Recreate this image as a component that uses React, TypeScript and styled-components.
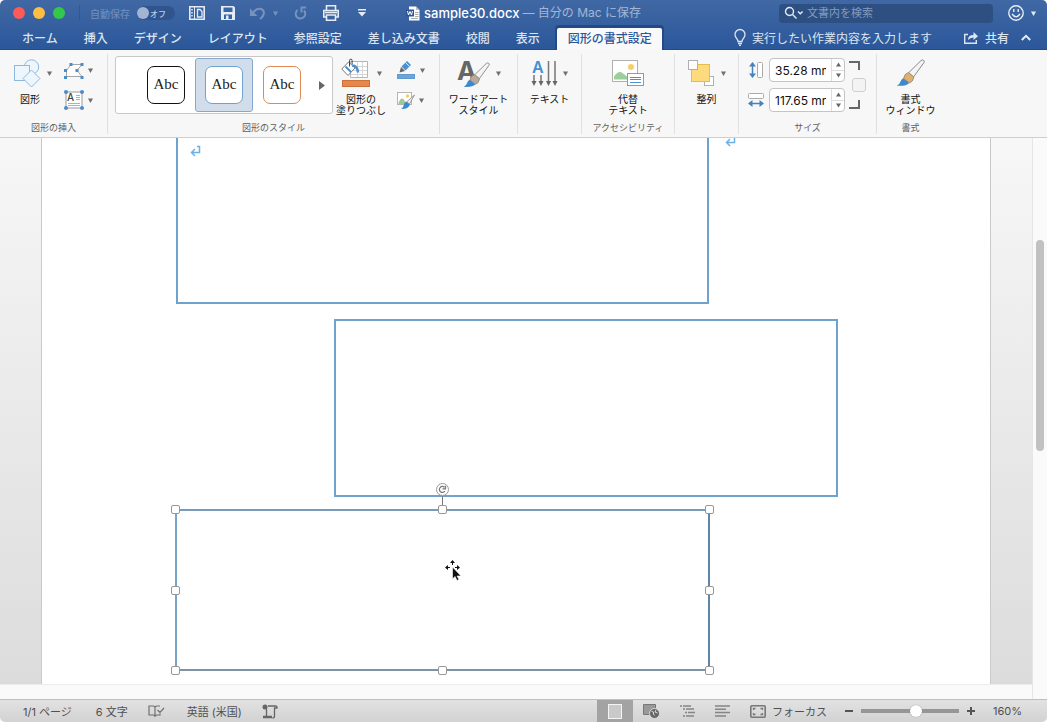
import React from "react";
import styled, { createGlobalStyle, css } from "styled-components";

const Global = createGlobalStyle`
  *, *::before, *::after { box-sizing: border-box; }
  body { margin: 0; background: #fff; }
  body, button, input {
    font-family: Inter, "Noto Sans CJK JP", sans-serif;
  }
  button { border: 0; padding: 0; background: none; color: inherit; font-size: inherit; }
  svg { display: block; flex: none; overflow: visible; }
`;

const Window = styled.div`
  display: flex;
  flex-direction: column;
  min-height: 100vh;
  border-radius: 5px;
  overflow: hidden;
  color: #1c1c1c;
`;

const Header = styled.header`
  background: linear-gradient(#4068a4, #2b579a);
  border-bottom: 1px solid #244b87;
  color: #dfe7f2;
`;

const TitleBar = styled.div`
  display: grid;
  grid-template-columns: 1fr auto 1fr;
  align-items: center;
  height: 26px;
`;

const QuickAccess = styled.div`
  display: flex;
  align-items: center;
  padding-left: 13px;
`;

const Lights = styled.div`
  display: flex;
  gap: 8px;
  padding-right: 14px;
  margin-right: 10px;
  border-right: 1px solid #33588f;
`;

const Light = styled.button<{ $color: string }>`
  width: 12px;
  height: 12px;
  margin: 2px 0;
  border-radius: 50%;
  background: ${(p) => p.$color};
`;

const AutoSave = styled.label`
  display: flex;
  align-items: center;
  gap: 7px;
  margin-right: 14px;
  font-size: 10px;
  font-weight: 500;
  color: #6d8aba;
`;

const Switch = styled.span`
  position: relative;
  display: flex;
  align-items: center;
  justify-content: flex-end;
  width: 38px;
  height: 14px;
  padding-right: 9px;
  border-radius: 7px;
  background: #30558e;
  color: #bccbe1;
  font-size: 8px;
  input {
    appearance: none;
    position: absolute;
    left: 0;
    top: 1px;
    width: 12px;
    height: 12px;
    margin: 0;
    border-radius: 50%;
    background: #a2b4d2;
  }
`;

const IconButton = styled.button<{ $gap?: number; $dim?: boolean }>`
  display: flex;
  align-items: center;
  gap: 7px;
  margin-right: ${(p) => p.$gap ?? 0}px;
  color: ${(p) => (p.$dim ? "#7892bd" : "#e6ecf5")};
`;

const DocTitle = styled.h1`
  display: flex;
  align-items: center;
  margin: 0;
  font-size: 12px;
  line-height: 16px;
  font-weight: 400;
  color: #a3b7d6;
  white-space: pre;
  strong { font-size: 13px; font-weight: 500; color: #fff; margin: 0 3px 0 4px; }
`;

const TitleRight = styled.div`
  display: flex;
  align-items: center;
  justify-content: flex-end;
  padding-right: 11px;
`;

const Search = styled.label`
  display: flex;
  align-items: center;
  gap: 3px;
  width: 214px;
  height: 19px;
  margin-right: 15px;
  padding: 0 5px;
  border-radius: 4px;
  background: #2d4f81;
  input {
    flex: 1;
    min-width: 0;
    border: 0;
    padding: 0;
    background: none;
    font-size: 11px;
    line-height: 16px;
    color: #fff;
  }
  input::placeholder { color: #829bc0; opacity: 1; }
`;

const TabBar = styled.nav`
  display: flex;
  align-items: stretch;
  height: 23px;
  padding: 0 16px 0 9px;
  font-size: 12px;
`;

const Tab = styled.button<{ $active?: boolean }>`
  padding: 0 13px;
  font-weight: 500;
  white-space: nowrap;
  color: #dde5f1;
  ${(p) =>
    p.$active &&
    css`
      margin: 2px 0 -1px 4px;
      padding: 0 10px 4px 11px;
      border-radius: 2px 2px 0 0;
      background: #f9f9f9;
      color: #2b579a;
      box-shadow: 0 -1px 0 2px #234a84;
      clip-path: inset(-3px -3px 0 -3px);
    `}
`;

const TabTools = styled.div`
  display: flex;
  align-items: center;
  margin-left: auto;
  white-space: nowrap;
`;

const Tool = styled.button<{ $bold?: boolean; $gap: number }>`
  display: flex;
  align-items: center;
  gap: 6px;
  margin-right: ${(p) => p.$gap}px;
  font-weight: ${(p) => (p.$bold ? 500 : 400)};
  color: #dde5f1;
`;

const Ribbon = styled.div`
  display: flex;
  height: 88px;
  padding: 4px 0 3px;
  border-bottom: 1px solid #cfcfcf;
  background: #f7f7f7;
`;

const Group = styled.section<{ $w: number; $last?: boolean }>`
  display: flex;
  flex-direction: column;
  flex: none;
  width: ${(p) => p.$w}px;
  border-right: ${(p) => (p.$last ? 0 : 1)}px solid #e0e0e0;
`;

const GroupBody = styled.div<{ $start?: number }>`
  display: flex;
  flex: 1;
  justify-content: ${(p) => (p.$start === undefined ? "center" : "flex-start")};
  padding-left: ${(p) => p.$start ?? 0}px;
`;

const GroupLabel = styled.h2`
  height: 12px;
  margin: 0;
  font-size: 9px;
  line-height: 12px;
  font-weight: 400;
  text-align: center;
  color: #606060;
`;

const BigButton = styled.button<{ $w: number }>`
  display: flex;
  flex-direction: column;
  align-items: center;
  width: ${(p) => p.$w}px;
  font-size: 10px;
  line-height: 11px;
  color: #111;
  white-space: pre;
  padding-top: 3px;
`;

const BigIcon = styled.span<{ $lead?: number }>`
  display: flex;
  align-items: center;
  gap: 6px;
  height: 32px;
  margin: 0 0 5px ${(p) => p.$lead ?? 0}px;
`;

const Stack = styled.div<{ $left: number }>`
  display: flex;
  flex-direction: column;
  gap: 8px;
  padding-top: 5px;
  margin-left: ${(p) => p.$left}px;
`;

const SmallButton = styled.button`
  display: flex;
  align-items: center;
  gap: 4px;
  height: 22px;
`;

const Gallery = styled.div`
  display: flex;
  height: 58px;
  width: 218px;
  margin-top: 2px;
  padding: 1px 0 1px 21px;
  border: 1px solid #c8c8c8;
  border-radius: 3px;
  background: #fff;
`;

const Swatch = styled.button<{ $color: string; $on?: boolean }>`
  display: grid;
  place-items: center;
  width: 58px;
  border-radius: 3px;
  border: 1px solid ${(p) => (p.$on ? "#86a8d0" : "transparent")};
  background: ${(p) => (p.$on ? "#d1ddeb" : "transparent")};
  span {
    display: grid;
    place-items: center;
    width: 38px;
    height: 38px;
    padding-bottom: 1px;
    border: 1px solid ${(p) => p.$color};
    border-radius: 7px;
    background: #fff;
    font-family: "Liberation Serif", serif;
    font-size: 15px;
    color: #222;
  }
`;

const More = styled.button`
  display: grid;
  place-items: center;
  flex: 1;
`;

const SizeFields = styled.div`
  display: flex;
  flex-direction: column;
  gap: 6px;
  padding-top: 4px;
`;

const SizeRow = styled.label`
  display: flex;
  align-items: center;
  gap: 5px;
  height: 24px;
`;

const Spin = styled.span`
  display: flex;
  width: 76px;
  height: 24px;
  border: 1px solid #c4c4c4;
  border-radius: 4px;
  background: #fff;
  input {
    width: 56px;
    border: 0;
    padding: 0 0 0 5px;
    background: none;
    font-size: 12px;
    color: #111;
    outline: 0;
  }
`;

const Steps = styled.span`
  display: flex;
  flex-direction: column;
  flex: 1;
  margin-left: 5px;
  border-left: 1px solid #ddd;
  button { flex: 1; display: grid; place-items: center; }
  button + button { border-top: 1px solid #ddd; }
`;

const Lock = styled.div`
  display: flex;
  flex-direction: column;
  align-items: flex-start;
  justify-content: space-between;
  height: 48px;
  margin: 7px 0 0 4px;
  input {
    appearance: none;
    width: 14px;
    height: 14px;
    margin: 0 0 0 3px;
    border: 1px solid #cfcfcf;
    border-radius: 3px;
    background: #f3f3f3;
  }
`;

const Workspace = styled.main`
  display: flex;
  flex: 1;
  min-height: 546px;
`;

const View = styled.div`
  display: flex;
  flex-direction: column;
  flex: 1;
  min-width: 0;
`;

const Desk = styled.div`
  display: flex;
  flex: 1;
  padding: 0 42px;
  background: linear-gradient(#f7f7f7, #dcdcdc);
`;

const Page = styled.article`
  position: relative;
  flex: 1;
  overflow: hidden;
  background: #fff;
  box-shadow: -1px 0 0 #cacaca, 1px 0 0 #cacaca;
`;

const HTrack = styled.div`
  height: 15px;
  background: #fafafa;
  border-top: 1px solid #ececec;
`;

const VTrack = styled.div`
  width: 15px;
  padding: 102px 3px 0;
  background: #fafafa;
  border-left: 1px solid #e6e6e6;
`;

const Thumb = styled.div`
  width: 8px;
  height: 211px;
  border-radius: 4px;
  background: #c1c1c1;
`;

const Shape = styled.div<{ $x: number; $y: number; $w: number; $h: number }>`
  position: absolute;
  left: ${(p) => p.$x}px;
  top: ${(p) => p.$y}px;
  width: ${(p) => p.$w}px;
  height: ${(p) => p.$h}px;
  border: 2px solid #6fa3cd;
`;

const Selected = styled(Shape)`
  border-color: #789bb9 #6085a6 #7f93a6 #77a3c8;
`;

const HandleFrame = styled.div`
  position: absolute;
  inset: -2px -1px -1px -2px;
`;

const Handle = styled.i<{ $x: number; $y: number }>`
  position: absolute;
  left: ${(p) => p.$x}%;
  top: ${(p) => p.$y}%;
  width: 9px;
  height: 9px;
  margin: -4px 0 0 -4px;
  border: 1px solid #979797;
  border-radius: 2px;
  background: #fff;
`;

const Floating = styled.svg<{ $x: number; $y: number }>`
  position: absolute;
  left: ${(p) => p.$x}px;
  top: ${(p) => p.$y}px;
`;

const StatusBar = styled.footer`
  display: flex;
  align-items: center;
  height: 23px;
  padding: 0 25px 0 23px;
  border-top: 1px solid #bfbfbf;
  background: linear-gradient(#e2e2e2, #d2d2d2);
  font-size: 11px;
  color: #505050;
  white-space: nowrap;
`;

const StatusItem = styled.button<{ $gap: number }>`
  display: flex;
  align-items: center;
  gap: 6px;
  margin-right: ${(p) => p.$gap}px;
`;

const StatusRight = styled.div`
  display: flex;
  align-items: center;
  align-self: stretch;
  margin-left: auto;
`;

const ActiveView = styled.button`
  display: grid;
  place-items: center;
  align-self: stretch;
  width: 36px;
  margin-right: 10px;
  background: #a3a3a3;
`;

const Zoom = styled.input`
  appearance: none;
  width: 98px;
  height: 12px;
  margin: 0 7px;
  background: linear-gradient(#969696, #969696) center / 100% 4px no-repeat;
  border-radius: 2px;
  &::-webkit-slider-thumb {
    appearance: none;
    width: 12px;
    height: 12px;
    border-radius: 50%;
    background: #fff;
    box-shadow: 0 0 1px #777;
  }
`;

const Arrow = ({ color = "#707070" }: { color?: string }) => (
  <svg width="5" height="5" viewBox="0 0 5 5" aria-hidden="true"><path d="M0 .5h5L2.500 5z" fill={color} /></svg>
);

const ShapesIcon = () => (
  <svg width="27" height="28" viewBox="0 0 27 28" fill="#eef6fd" stroke="#8db9e0">
    <circle cx="17.500" cy="8" r="7.200" />
    <rect x=".5" y="6.500" width="15" height="15" />
    <path d="M17.500 11l8.500 8.500-8.500 8.500-8.500-8.500z" />
  </svg>
);

const EditPointsIcon = () => (
  <svg width="20" height="17" viewBox="0 0 20 17">
    <path d="M7 2.500h11l-5 6 5 6H2.500v-6z" fill="#fff" stroke="#a5a5a5" />
    <path d="M5.500 1h3v3h-3zM16.500 1h3v3h-3zM11.500 7h3v3h-3zM0 7h3v3H0zM0 14h3v3H0zM16.500 14h3v3h-3z" fill="#4a8ccb" />
  </svg>
);

const TextBoxIcon = () => (
  <svg width="20" height="20" viewBox="0 0 20 20">
    <rect x="2" y="2" width="16" height="16" fill="#fff" stroke="#9b9b9b" />
    <text x="3" y="11" fontSize="10" fontWeight="500" fill="#444">A</text>
    <path d="M12 5.500h4M12 7.500h4M12 9.500h4M4 13.500h12M4 15.500h12" stroke="#b0b0b0" />
    <g fill="#4a8ccb"><circle cx="2" cy="2" r="2" /><circle cx="18" cy="2" r="2" /><circle cx="2" cy="18" r="2" /><circle cx="18" cy="18" r="2" /></g>
  </svg>
);

const FillIcon = () => (
  <svg width="30" height="30" viewBox="0 0 30 30">
    <path d="M9.500 3.500h17v16h-17z" fill="#fff" stroke="#b5b5b5" />
    <path d="M10 8.500h16M10 12.500h16M10 16.500h16M16.500 4v15M21.500 4v15" stroke="#d6d6d6" fill="none" />
    <path d="M7.500 4l6.500 6-7 7.500L.8 11z" fill="#fff" stroke="#777" />
    <path d="M4.500 8.500l5.500 5.500" fill="none" stroke="#4b91d1" strokeWidth="2" />
    <path d="M11 7.500q5.500 0 6 7" fill="none" stroke="#4b91d1" strokeWidth="2.500" />
    <path d="M8.500 8.500V2.500a1.300 1.300 0 0 1 2.600 0V6" fill="none" stroke="#444" />
    <rect x="1.500" y="22.500" width="27" height="6" fill="#ea8649" stroke="#c9733d" />
  </svg>
);

const OutlineIcon = () => (
  <svg width="20" height="20" viewBox="0 0 20 20">
    <path d="M3.500 12.500l1.500-5.500 4 4z" fill="#666" />
    <path d="M5.500 6.500L11 1l4 4-5.500 5.500z" fill="#4b91d1" />
    <path d="M9.500 2.500l4 4" stroke="#e6f0fa" />
    <rect x="1.500" y="14.500" width="17" height="4" fill="#6ea5d8" stroke="#5f99cd" />
  </svg>
);

const PictureFxIcon = () => (
  <svg width="19" height="20" viewBox="0 0 19 20">
    <rect x="1.500" y="2.500" width="14" height="12" fill="#fff" stroke="#b5b5b5" />
    <path d="M2.500 13q2-6 5-4l3 5h-8z" fill="#9cc99a" /><circle cx="11.500" cy="6" r="1.700" fill="#f6cc6b" />
    <path d="M18.500 5l-5 9-3-2z" fill="#eee" stroke="#888" strokeWidth=".8" />
    <path d="M10 11.500l4 3q-2 5-9 4.500 2-1 2.500-3 .5-3.500 2.500-4.500z" fill="#3f88cc" />
  </svg>
);

const Brush = ({ ferrule }: { ferrule: string }) => (
  <g>
    <path d="M27.500 1.200q1.200.800.500 2.300L17.500 18l-5-4.200L25 1.600q1.300-1 2.500-.4z" fill="#f4f4f4" stroke="#8a8a8a" />
    <path d="M12.500 13.500l5.300 4.500q-.8 5-4.300 6l-6-4.500q1-5 5-6z" fill={ferrule} stroke="#8c8072" strokeWidth=".8" />
    <path d="M7.200 19.200l6 4.800q-3.200 3.500-12.400 2.700 3-1.500 3.600-4 .8-2.500 2.800-3.500z" fill="#3f88cc" />
  </g>
);

const WordArtIcon = () => (
  <svg width="34" height="31" viewBox="0 0 34 31">
    <text x="1" y="22" fontSize="26" fontWeight="700" fill="#666">A</text>
    <g transform="translate(7 4) scale(.93)"><Brush ferrule="#b9ab9b" /></g>
  </svg>
);

const TextDirIcon = () => (
  <svg width="26" height="28" viewBox="0 0 26 28">
    <text x="1" y="14" fontSize="16" fontWeight="600" fill="#4390d4">A</text>
    <path d="M3 16v9M10 16v9M17.500 2v23M24 2v23" stroke="#777" strokeWidth="1.500" />
    <path d="M.5 22h5L3 27zM7.500 22h5L10 27zM15 22h5l-2.500 5zM21.500 22h5L24 27z" fill="#666" />
  </svg>
);

const AltTextIcon = () => (
  <svg width="33" height="28" viewBox="0 0 33 28">
    <rect x=".5" y="1.500" width="25" height="21" fill="#fff" stroke="#b0b0b0" />
    <path d="M2 20.500v-3q5-7 9-3l4 3v3z" fill="#9cce9b" /><circle cx="19" cy="8" r="3" fill="#f9ce68" />
    <rect x="15.500" y="14.500" width="16" height="12" fill="#fff" stroke="#69a4d9" />
    <path d="M18 18.500h11M18 20.500h11M18 23.500h11" stroke="#4b91d1" />
  </svg>
);

const AlignIcon = () => (
  <svg width="28" height="28" viewBox="0 0 28 28">
    <rect x="17.500" y="17.500" width="9" height="9" fill="#fff" stroke="#b0b0b0" />
    <rect x="4.500" y="5.500" width="18" height="17" fill="#fddb7c" stroke="#e8bb4d" />
    <rect x="1.500" y="1.500" width="9" height="9" fill="#fff" stroke="#b0b0b0" />
  </svg>
);

const FormatIcon = () => (
  <svg width="30" height="28" viewBox="0 0 30 28"><Brush ferrule="#e2b06c" /></svg>
);

const HeightIcon = () => (
  <svg width="16" height="18" viewBox="0 0 16 18">
    <path d="M4.500 2v14" stroke="#4583bd" strokeWidth="1.500" /><path d="M1 5.500L4.500 1 8 5.500zM1 12.500L4.500 17 8 12.500z" fill="#4583bd" />
    <rect x="9.500" y="1.500" width="5" height="15" rx="1" fill="#fff" stroke="#aaa" />
  </svg>
);

const WidthIcon = () => (
  <svg width="16" height="16" viewBox="0 0 16 16">
    <rect x=".5" y="1.500" width="15" height="5" rx="1" fill="#fff" stroke="#aaa" />
    <path d="M2 11.500h12" stroke="#4583bd" strokeWidth="1.500" /><path d="M4.500 8L0 11.500 4.500 15zM11.500 8l4.500 3.500-4.500 3.500z" fill="#4583bd" />
  </svg>
);

const StepIcon = ({ up }: { up?: boolean }) => (
  <svg width="5" height="5" viewBox="0 0 5 5"><path d={up ? "M0 4.500h5L2.500.500z" : "M0 .5h5L2.500 4.500z"} fill="#666" /></svg>
);

const SizeField = ({ name, value, icon }: { name: string; value: string; icon: React.ReactNode }) => (
  <SizeRow>
    {icon}
    <Spin>
      <input aria-label={name} defaultValue={value} />
      <Steps>
        <button aria-label={`${name}を増やす`}><StepIcon up /></button>
        <button aria-label={`${name}を減らす`}><StepIcon /></button>
      </Steps>
    </Spin>
  </SizeRow>
);

const ReturnMark = ({ x, y }: { x: number; y: number }) => (
  <Floating $x={x} $y={y} width="12" height="12" viewBox="0 0 12 12" fill="none" stroke="#6cb0e4" strokeWidth="1.500">
    <path d="M7 1.500h2.500v6H2M5 4L1.500 7.500 5 11" />
  </Floating>
);

const tabs = ["ホーム", "挿入", "デザイン", "レイアウト", "参照設定", "差し込み文書", "校閲", "表示"];
const handles = [[0, 0], [50, 0], [100, 0], [0, 50], [100, 50], [0, 100], [50, 100], [100, 100]];

export default function App() {
  return (
    <Window>
      <Global />
      <Header>
        <TitleBar>
          <QuickAccess>
            <Lights>
              <Light $color="#fc5b57" aria-label="閉じる" />
              <Light $color="#fdbe41" aria-label="しまう" />
              <Light $color="#34c84a" aria-label="拡大" />
            </Lights>
            <AutoSave>
              自動保存
              <Switch><input type="checkbox" />オフ</Switch>
            </AutoSave>
            <IconButton $gap={16} aria-label="サイドバー">
              <svg width="16" height="14" viewBox="0 0 16 14" fill="none" stroke="currentColor">
                <path d="M.8.8h14.400v12.400H.8z" strokeWidth="1.600" />
                <path d="M3 3v1.500M3 6v1.500M3 9v1.500" strokeWidth="1.500" />
                <path d="M5.500 1v12" />
                <path d="M8.500 3.500h2.500l2 2v5.500H8.500z" strokeWidth="1.300" />
              </svg>
            </IconButton>
            <IconButton $gap={15} aria-label="保存">
              <svg width="14" height="14" viewBox="0 0 14 14">
                <path d="M0 0h12.500L14 1.500V14H0zM2.500 1.500V6h9V1.500zM3 8.500V13h8V8.500z" fill="currentColor" fillRule="evenodd" />
                <path d="M5 9.500h2.500V13H5z" fill="currentColor" />
              </svg>
            </IconButton>
            <IconButton $gap={16} $dim aria-label="元に戻す">
              <svg width="16" height="14" viewBox="0 0 16 14" fill="none" stroke="currentColor" strokeWidth="2">
                <path d="M2 8C5 3.500 8 2 11 3c4 1.500 4 6-1 10" /><path d="M0 2.500V10h7.500z" fill="currentColor" stroke="none" />
              </svg>
              <Arrow color="#7892bd" />
            </IconButton>
            <IconButton $gap={16} $dim aria-label="繰り返し">
              <svg width="13" height="14" viewBox="0 0 13 14" fill="none" stroke="currentColor" strokeWidth="2">
                <path d="M10 4.500A4.800 4.800 0 1 1 3.500 4M6.500 1.500H12M7.500 1v5.500" />
              </svg>
            </IconButton>
            <IconButton $gap={19} aria-label="印刷">
              <svg width="16" height="16" viewBox="0 0 16 16" fill="none" stroke="currentColor" strokeWidth="1.600">
                <path d="M3.500 5V.8h9V5M3.500 12H.8V5.500h14.400V12h-2.700" /><path d="M3.500 10h9v5.200h-9z" /><path d="M2 7.500h12" />
              </svg>
            </IconButton>
            <IconButton aria-label="カスタマイズ">
              <svg width="8" height="8" viewBox="0 0 8 8" fill="currentColor"><path d="M0 0h8v1.400H0zM0 3h8L4 7.500z" /></svg>
            </IconButton>
          </QuickAccess>
          <DocTitle>
            <svg width="14" height="15" viewBox="0 0 14 15">
              <path d="M3 .5h7l3.500 3.500v10.500H3z" fill="#fff" />
              <path d="M10 .5V4h3.500" fill="#bbb" /><path d="M9 6.500h3.500M9 8.500h3.500M9 10.500h3.500M5 12.500h7" stroke="#aaa" />
              <path d="M0 3.500h8v7H0z" fill="#2b579a" /><path d="M1.500 5l1 4L4 5.500 5.500 9l1-4" fill="none" stroke="#fff" />
            </svg>
            <strong>sample30.docx</strong>— 自分の Mac に保存
          </DocTitle>
          <TitleRight>
            <Search>
              <svg width="20" height="14" viewBox="0 0 20 14" fill="none" stroke="#e6ecf5" strokeWidth="1.400">
                <circle cx="5.500" cy="5.500" r="4" /><path d="M8.500 8.500l4 4M14 5.500l2.300 2.300L18.600 5.500" />
              </svg>
              <input aria-label="検索" placeholder="文書内を検索" />
            </Search>
            <IconButton aria-label="フィードバック">
              <svg width="16" height="16" viewBox="0 0 16 16" fill="none" stroke="currentColor" strokeWidth="1.400">
                <circle cx="8" cy="8" r="7.200" /><path d="M5.800 4v3M10.200 4v3M4 9q4 5.500 8 0" />
              </svg>
              <Arrow color="#e6ecf5" />
            </IconButton>
          </TitleRight>
        </TitleBar>
        <TabBar>
          {tabs.map((t) => <Tab key={t}>{t}</Tab>)}
          <Tab $active>図形の書式設定</Tab>
          <TabTools>
            <Tool $gap={32}>
              <svg width="12" height="17" viewBox="0 0 12 17" fill="none" stroke="currentColor" strokeWidth="1.300">
                <path d="M4 12.500C4 9.500 1 9 1 5.500a5 5 0 0 1 10 0C11 9 8 9.500 8 12.500zM4 14.500h4M5 16.300h2" />
              </svg>
              実行したい作業内容を入力します
            </Tool>
            <Tool $gap={12} $bold>
              <svg width="15" height="13" viewBox="0 0 15 13" fill="none" stroke="currentColor" strokeWidth="1.400">
                <path d="M4 3.500H.7v8.800h11.600V9" /><path d="M4 9q0-5 5.500-5V1L14 5.200 9.500 9V6.500Q6 6.500 4 9z" fill="currentColor" stroke="none" />
              </svg>
              共有
            </Tool>
            <IconButton aria-label="リボンを折りたたむ">
              <svg width="10" height="7" viewBox="0 0 10 7" fill="none" stroke="currentColor" strokeWidth="2"><path d="M.8 6L5 1.800 9.200 6" /></svg>
            </IconButton>
          </TabTools>
        </TabBar>
      </Header>

      <Ribbon>
        <Group $w={108}>
          <GroupBody $start={6}>
            <BigButton $w={48}><BigIcon $lead={6}><ShapesIcon /><Arrow /></BigIcon>図形</BigButton>
            <Stack $left={10}>
              <SmallButton aria-label="図形の編集"><EditPointsIcon /><Arrow /></SmallButton>
              <SmallButton aria-label="テキストボックス"><TextBoxIcon /><Arrow /></SmallButton>
            </Stack>
          </GroupBody>
          <GroupLabel>図形の挿入</GroupLabel>
        </Group>
        <Group $w={332}>
          <GroupBody $start={7}>
            <Gallery>
              <Swatch $color="#111"><span>Abc</span></Swatch>
              <Swatch $color="#6fa3cd" $on><span>Abc</span></Swatch>
              <Swatch $color="#dd8a55"><span>Abc</span></Swatch>
              <More aria-label="その他のスタイル"><svg width="6" height="9" viewBox="0 0 6 9"><path d="M0 0l6 4.500L0 9z" fill="#666" /></svg></More>
            </Gallery>
            <BigButton $w={56}><BigIcon><FillIcon /><Arrow /></BigIcon>{"図形の\n塗りつぶし"}</BigButton>
            <Stack $left={7}>
              <SmallButton aria-label="図形の枠線"><OutlineIcon /><Arrow /></SmallButton>
              <SmallButton aria-label="図の効果"><PictureFxIcon /><Arrow /></SmallButton>
            </Stack>
          </GroupBody>
          <GroupLabel>図形のスタイル</GroupLabel>
        </Group>
        <Group $w={78}>
          <GroupBody><BigButton $w={76}><BigIcon><WordArtIcon /><Arrow /></BigIcon>{"ワードアート\nスタイル"}</BigButton></GroupBody>
        </Group>
        <Group $w={64}>
          <GroupBody><BigButton $w={62}><BigIcon><TextDirIcon /><Arrow /></BigIcon>テキスト</BigButton></GroupBody>
        </Group>
        <Group $w={93}>
          <GroupBody><BigButton $w={76}><BigIcon><AltTextIcon /></BigIcon>{"代替\nテキスト"}</BigButton></GroupBody>
          <GroupLabel>アクセシビリティ</GroupLabel>
        </Group>
        <Group $w={64}>
          <GroupBody><BigButton $w={62}><BigIcon><AlignIcon /><Arrow /></BigIcon>整列</BigButton></GroupBody>
        </Group>
        <Group $w={138}>
          <GroupBody $start={9}>
            <SizeFields>
              <SizeField name="高さ" value="35.28 mm" icon={<HeightIcon />} />
              <SizeField name="幅" value="117.65 mm" icon={<WidthIcon />} />
            </SizeFields>
            <Lock>
              <svg width="11" height="9" viewBox="0 0 11 9"><path d="M0 1h10v8" fill="none" stroke="#666" strokeWidth="2" /></svg>
              <input type="checkbox" aria-label="縦横比を固定" />
              <svg width="11" height="9" viewBox="0 0 11 9"><path d="M0 8h10V0" fill="none" stroke="#666" strokeWidth="2" /></svg>
            </Lock>
          </GroupBody>
          <GroupLabel>サイズ</GroupLabel>
        </Group>
        <Group $w={67} $last>
          <GroupBody><BigButton $w={64}><BigIcon><FormatIcon /></BigIcon>{"書式\nウィンドウ"}</BigButton></GroupBody>
          <GroupLabel>書式</GroupLabel>
        </Group>
      </Ribbon>

      <Workspace>
        <View>
          <Desk>
            <Page>
              <Shape $x={134} $y={-4} $w={533} $h={170} />
              <ReturnMark x={148} y={7} />
              <ReturnMark x={683} y={-3} />
              <Shape $x={292} $y={181} $w={504} $h={178} />
              <Selected $x={133} $y={371} $w={535} $h={162}>
                <HandleFrame>
                  {handles.map(([x, y]) => <Handle key={`${x}-${y}`} $x={x} $y={y} />)}
                </HandleFrame>
              </Selected>
              <Floating $x={393} $y={344} width="15" height="23" viewBox="0 0 15 23" fill="none" stroke="#777">
                <path d="M7.500 14v9" /><circle cx="7.500" cy="7.500" r="6" fill="#fff" stroke="#999" />
                <path d="M10 9A3 3 0 1 1 9.500 5.300M10.500 3.800v3H7.500" strokeWidth="1.200" />
              </Floating>
              <Floating $x={402} $y={421} width="18" height="22" viewBox="0 0 18 22" fill="#111">
                <path d="M8.500 1l2.500 3H9v2H8V4H6zM1 8.500L4 6v2h2v1H4v2zM16 8.500L13 6v2h-2v1h2v2z" />
                <path d="M8.500 8l8.500 9h-4l2 3.500-2 1-2-4-2.500 2.500z" stroke="#fff" strokeWidth=".6" />
              </Floating>
            </Page>
          </Desk>
          <HTrack />
        </View>
        <VTrack><Thumb /></VTrack>
      </Workspace>

      <StatusBar>
        <StatusItem $gap={24}>1/1 ページ</StatusItem>
        <StatusItem $gap={20}>6 文字</StatusItem>
        <StatusItem $gap={22} aria-label="校正">
          <svg width="17" height="14" viewBox="0 0 17 14" fill="none" stroke="#707070" strokeWidth="1.200">
            <path d="M12 2H8.500L7 3 5.500 2H1v9h4.500L7 12l1.500-1H12V9.500M7 3v10M9.500 6l2.500 2.500L16 4" />
          </svg>
        </StatusItem>
        <StatusItem $gap={20}>英語 (米国)</StatusItem>
        <StatusItem $gap={0} aria-label="マクロの記録">
          <svg width="16" height="15" viewBox="0 0 16 15" fill="none" stroke="#666" strokeWidth="1.300">
            <path d="M6 2h7.500a1.500 1.500 0 0 1 1.500 2h-2.500v8q0 2-2 2M4.500 5v7" /><circle cx="3" cy="3" r="2.500" fill="#666" stroke="none" /><path d="M1 13h9" strokeWidth="2.500" />
          </svg>
        </StatusItem>
        <StatusRight>
          <ActiveView aria-label="印刷レイアウト"><svg width="14" height="15" viewBox="0 0 14 15"><rect x=".5" y=".5" width="13" height="14" fill="#c9c9c9" stroke="#f4f4f4" /></svg></ActiveView>
          <StatusItem $gap={20} aria-label="Web レイアウト">
            <svg width="17" height="15" viewBox="0 0 17 15"><path d="M.5.5h12v10H.5z" fill="#999" stroke="#777" /><circle cx="11.500" cy="9.500" r="5" fill="#666" stroke="#ddd" /><path d="M8.500 7.500l2 .5v2l1 1.500M13 6l-1 2 2.500 1" stroke="#ddd" fill="none" /></svg>
          </StatusItem>
          <StatusItem $gap={20} aria-label="アウトライン">
            <svg width="15" height="12" viewBox="0 0 15 12" stroke="#858585" strokeWidth="1.500"><path d="M0 1h2M3 1h8M3 4h2M6 4h8M5 7.500h2M8 7.500h7M3 11h2M6 11h8" /></svg>
          </StatusItem>
          <StatusItem $gap={20} aria-label="下書き">
            <svg width="15" height="12" viewBox="0 0 15 12" stroke="#858585" strokeWidth="1.500"><path d="M0 1h15M0 4.300h11M0 7.600h15M0 11h11" /></svg>
          </StatusItem>
          <StatusItem $gap={17}>
            <svg width="16" height="13" viewBox="0 0 16 13" fill="none" stroke="#777"><rect x=".8" y=".8" width="14.400" height="11.400" rx="1" strokeWidth="1.600" /><path d="M3.500 5V3.500h2M10.500 3.500h2V5M12.500 8v1.500h-2M5.500 9.500h-2V8" strokeWidth="1.300" /></svg>
            フォーカス
          </StatusItem>
          <StatusItem $gap={0} aria-label="縮小"><svg width="10" height="10" viewBox="0 0 10 10"><path d="M1 5h8" stroke="#555" strokeWidth="2" /></svg></StatusItem>
          <Zoom type="range" aria-label="ズーム" min={0} max={100} defaultValue={57} />
          <StatusItem $gap={17} aria-label="拡大"><svg width="10" height="10" viewBox="0 0 10 10"><path d="M1 5h8M5 1v8" stroke="#555" strokeWidth="2" /></svg></StatusItem>
          <StatusItem $gap={0}>160%</StatusItem>
        </StatusRight>
      </StatusBar>
    </Window>
  );
}
